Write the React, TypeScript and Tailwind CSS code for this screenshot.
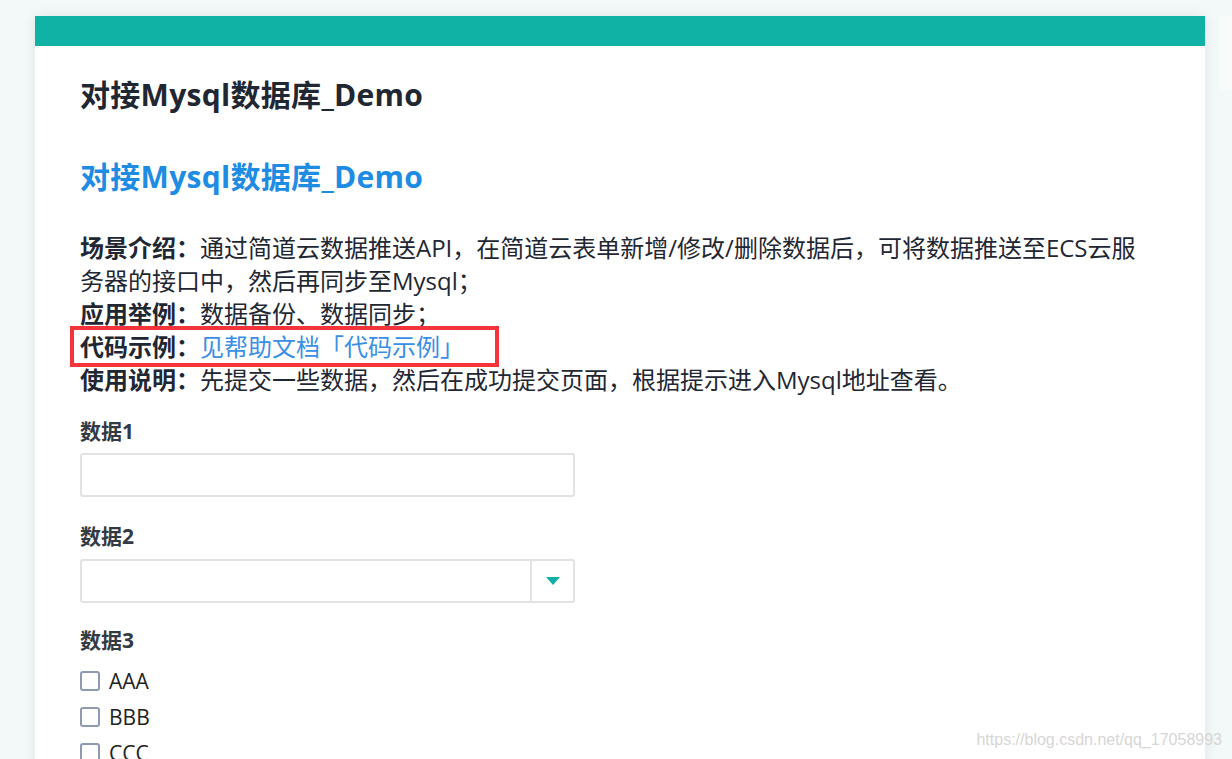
import React from "react";

const FONT = { fontFamily: '"Open Sans", "Noto Sans CJK SC", sans-serif' };

export default function App() {
  return (
    <div
      className="relative flex w-[1232px] h-[759px] overflow-hidden bg-[#f3f8f8] pt-[16px] pl-[35px] gap-[14px]"
      style={FONT}
    >
      <div className="w-[1170px] shrink-0 bg-white shadow-[0_0_12px_rgba(0,0,0,0.09)] self-start min-h-[760px]">
        <div className="h-[30px] bg-[#10b2a6]" />
        <div className="pl-[45px] pr-[45px]">
          <h1 className="mt-[28px] text-[30px] leading-[42px] font-bold text-[#1f2733] tracking-[0.3px]">
            对接Mysql数据库_Demo
          </h1>
          <h2 className="mt-[40px] text-[30px] leading-[42px] font-bold text-[#1e8ce3] tracking-[0.3px]">
            对接Mysql数据库_Demo
          </h2>
          <div className="mt-[33px] w-[1070px] text-[24px] leading-[33px] text-[#1f2733]">
            <div>
              <span className="font-bold">场景介绍：</span>
              <span>
                通过简道云数据推送API，在简道云表单新增/修改/删除数据后，可将数据推送至ECS云服务器的接口中，然后再同步至Mysql；
              </span>
            </div>
            <div>
              <span className="font-bold">应用举例：</span>
              <span>数据备份、数据同步；</span>
            </div>
            <div className="relative">
              <span className="font-bold">代码示例：</span>
              <span className="text-[#3a8ee6]">见帮助文档「代码示例」</span>
              <div className="absolute left-[-10px] top-[-4px] w-[429px] h-[41px] border-[4px] border-[#f3343a]" />
            </div>
            <div>
              <span className="font-bold">使用说明：</span>
              <span>先提交一些数据，然后在成功提交页面，根据提示进入Mysql地址查看。</span>
            </div>
          </div>

          <div className="mt-[20px] text-[21px] leading-[30px] font-bold text-[#333a44]">数据1</div>
          <div className="mt-[7px] w-[495px] h-[44px] border-[2px] border-[#e2e2e2] rounded-[3px] bg-white" />

          <div className="mt-[24px] text-[21px] leading-[30px] font-bold text-[#333a44]">数据2</div>
          <div className="mt-[8px] w-[495px] h-[44px] border-[2px] border-[#e2e2e2] rounded-[3px] bg-white flex">
            <div className="flex-1" />
            <div className="w-[43px] border-l-[2px] border-[#e2e2e2] flex items-center justify-center">
              <svg width="14" height="8" viewBox="0 0 14 8">
                <path d="M0 0 L14 0 L7 8 Z" fill="#10b2a6" />
              </svg>
            </div>
          </div>

          <div className="mt-[22px] text-[21px] leading-[30px] font-bold text-[#333a44]">数据3</div>
          <div className="mt-[8px] flex flex-col">
            {["AAA", "BBB", "CCC"].map((t) => (
              <div key={t} className="h-[36px] flex items-center gap-[9px]">
                <div className="w-[20px] h-[20px] border-[2px] border-[#8e9ab0] rounded-[3px] bg-white" />
                <span className="text-[21px] leading-[30px] text-[#222]">{t}</span>
              </div>
            ))}
          </div>
        </div>
      </div>
      <div className="w-[60px] h-[74px] shrink-0 rounded-[4px] bg-[#f9fbfb]" />

      <div
        className="absolute right-[10px] top-[728px] text-[16px] leading-[24px] text-[#d6d6d6]"
        style={{ fontFamily: '"Liberation Sans", Arial, sans-serif' }}
      >
        https://blog.csdn.net/qq_17058993
      </div>
    </div>
  );
}
